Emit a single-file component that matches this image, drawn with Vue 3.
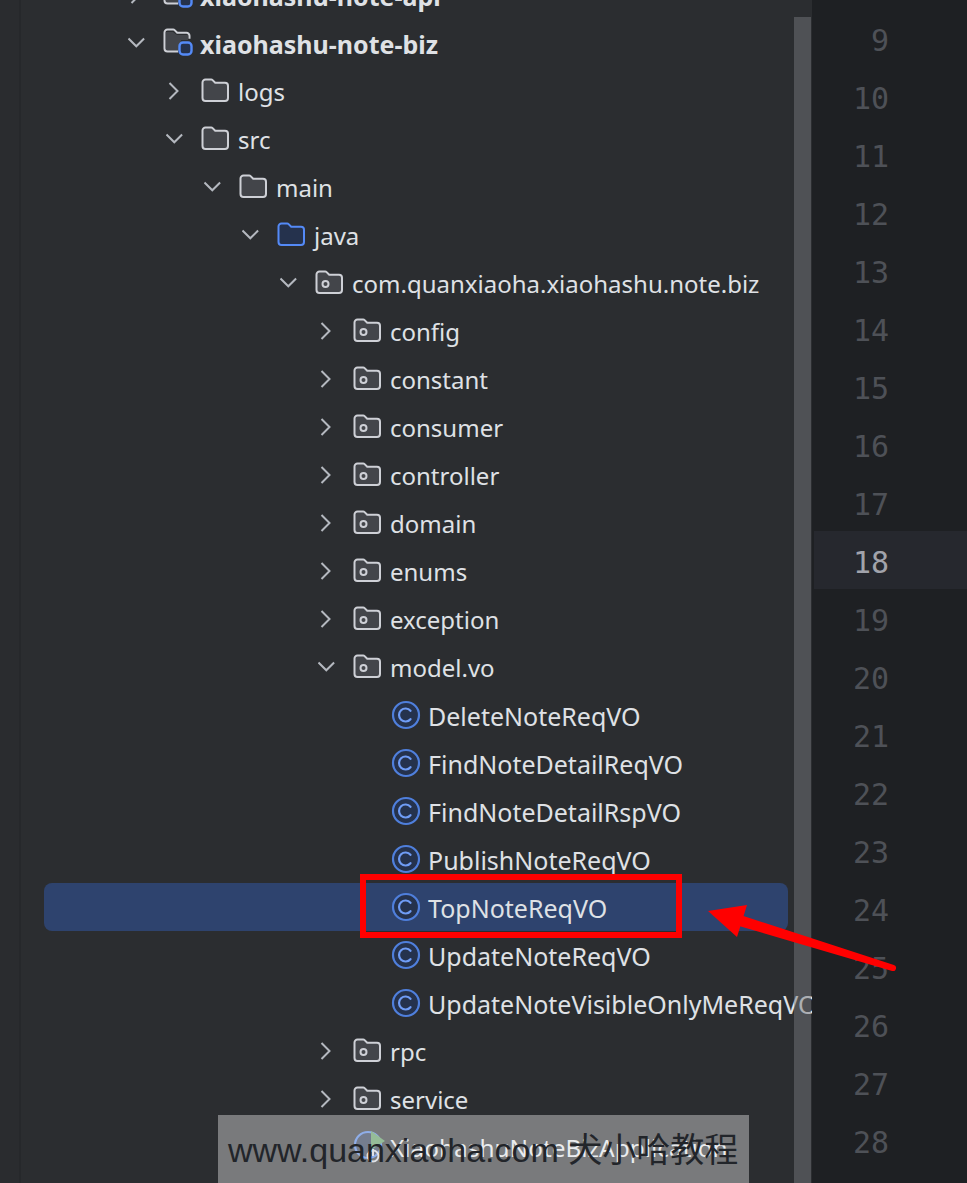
<script setup>
const rows = [
  { label: 'xiaohashu-note-api', level: 0, chevron: 'right', icon: 'module', bold: true },
  { label: 'xiaohashu-note-biz', level: 0, chevron: 'down', icon: 'module', bold: true },
  { label: 'logs', level: 1, chevron: 'right', icon: 'folder' },
  { label: 'src', level: 1, chevron: 'down', icon: 'folder' },
  { label: 'main', level: 2, chevron: 'down', icon: 'folder' },
  { label: 'java', level: 3, chevron: 'down', icon: 'source' },
  { label: 'com.quanxiaoha.xiaohashu.note.biz', level: 4, chevron: 'down', icon: 'package' },
  { label: 'config', level: 5, chevron: 'right', icon: 'package' },
  { label: 'constant', level: 5, chevron: 'right', icon: 'package' },
  { label: 'consumer', level: 5, chevron: 'right', icon: 'package' },
  { label: 'controller', level: 5, chevron: 'right', icon: 'package' },
  { label: 'domain', level: 5, chevron: 'right', icon: 'package' },
  { label: 'enums', level: 5, chevron: 'right', icon: 'package' },
  { label: 'exception', level: 5, chevron: 'right', icon: 'package' },
  { label: 'model.vo', level: 5, chevron: 'down', icon: 'package' },
  { label: 'DeleteNoteReqVO', level: 6, icon: 'class' },
  { label: 'FindNoteDetailReqVO', level: 6, icon: 'class' },
  { label: 'FindNoteDetailRspVO', level: 6, icon: 'class' },
  { label: 'PublishNoteReqVO', level: 6, icon: 'class' },
  { label: 'TopNoteReqVO', level: 6, icon: 'class', selected: true },
  { label: 'UpdateNoteReqVO', level: 6, icon: 'class' },
  { label: 'UpdateNoteVisibleOnlyMeReqVO', level: 6, icon: 'class' },
  { label: 'rpc', level: 5, chevron: 'right', icon: 'package' },
  { label: 'service', level: 5, chevron: 'right', icon: 'package' },
  { label: 'XiaohashuNoteBizApplication', level: 5, icon: 'run' },
]
const lines = [9, 10, 11, 12, 13, 14, 15, 16, 17, 18, 19, 20, 21, 22, 23, 24, 25, 26, 27, 28]
const folderPath = 'M1.5 4.5a3 3 0 0 1 3-3h5.6a2 2 0 0 1 1.5.6l2.6 2.7h9.8a3 3 0 0 1 3 3v12.2a3 3 0 0 1-3 3h-19.5a3 3 0 0 1-3-3z'
</script>

<template>
  <div class="window">
    <div class="strip"></div>
    <div class="tree-panel">
      <div class="tree">
        <div v-for="row in rows" :key="row.label" class="row" :class="{ selected: row.selected }">
          <div class="row-inner" :style="{ paddingLeft: row.level * 38 + 'px' }">
            <span class="chev">
              <svg v-if="row.chevron === 'down'" width="18" height="18" viewBox="0 0 18 18"><path d="M0.500 4.500 8.300 12.300 16.100 4.500" /></svg>
              <svg v-else-if="row.chevron === 'right'" width="18" height="22" viewBox="0 0 18 22"><path d="M3.500 3l8 8-8 8" /></svg>
            </span>
            <span class="icon">
              <svg v-if="row.icon === 'folder'" width="30" height="26" viewBox="0 0 30 26">
                <path :d="folderPath" class="f-grey" />
              </svg>
              <svg v-else-if="row.icon === 'source'" width="30" height="26" viewBox="0 0 30 26">
                <path :d="folderPath" class="f-blue" />
              </svg>
              <svg v-else-if="row.icon === 'package'" width="30" height="26" viewBox="0 0 30 26">
                <path :d="folderPath" class="f-grey" />
                <circle cx="10.500" cy="14" r="3" class="dot" />
              </svg>
              <svg v-else-if="row.icon === 'module'" width="32" height="30" viewBox="0 0 32 30">
                <path d="M3 4h7l4 3h11v5h-7v11H3z" class="f-fill" />
                <path d="M15 23.500H4.500a3 3 0 0 1-3-3V4.500a3 3 0 0 1 3-3h5.600a2 2 0 0 1 1.500.6l2.600 2.700h9.300a3 3 0 0 1 3 3v3" class="f-line" />
                <rect x="16.500" y="14.500" width="12" height="12" rx="3.500" class="mod" />
              </svg>
              <svg v-else-if="row.icon === 'class'" width="30" height="30" viewBox="0 0 30 30">
                <circle cx="15" cy="15" r="13" class="c-ring" />
                <path d="M19.500 10.800A6.500 6.500 0 1 0 19.500 19.200" class="c-letter" />
              </svg>
              <svg v-else-if="row.icon === 'run'" width="34" height="34" viewBox="0 0 34 34">
                <circle cx="15" cy="15" r="13" class="c-ring" />
                <path d="M18 1 32 11 18 20z" class="run-tri" />
                <circle cx="20" cy="26" r="5.500" class="run-power" />
                <path d="M20 19v7" class="run-power" />
              </svg>
            </span>
            <span class="label" :class="{ bold: row.bold, wide: row.icon === 'class', run: row.icon === 'run' }">{{ row.label }}</span>
          </div>
        </div>
      </div>
      <div class="scrollbar"></div>
    </div>
    <div class="gutter">
      <div v-for="n in lines" :key="n" class="line" :class="{ current: n === 18 }"><span class="num">{{ n }}</span></div>
    </div>

    <div class="red-box"></div>
    <svg class="arrow" width="200" height="80" viewBox="0 0 200 80">
      <path d="M39.600 14.800 193.900 65.100a3 3 0 0 1-1.800 5.800L36.400 25.200z" class="arrow-fill" />
      <path d="M8 11 47 5 37 37z" class="arrow-fill" />
    </svg>
    <div class="watermark"><span>www.quanxiaoha.com 犬小哈教程</span></div>
  </div>
</template>

<style>
html, body { margin: 0; background: #1e2023; }
</style>

<style scoped>
.window {
  position: relative;
  width: 967px;
  height: 1183px;
  display: flex;
  overflow: hidden;
  background: #1e2023;
  font-family: "Noto Sans", "Open Sans", sans-serif;
}
.strip {
  width: 19px;
  flex: none;
  background: #2a2c2f;
  border-right: 2px solid #26282b;
}
.tree-panel {
  position: relative;
  width: 791px;
  flex: none;
  background: #2b2d30;
  overflow: hidden;
}
.tree {
  margin-top: -29px;
  padding-left: 23px;
  width: 900px;
}
.row {
  height: 48px;
  width: 744px;
  border-radius: 8px;
}
.row.selected { background: #2e436e; }
.row-inner {
  margin-left: 84px;
  display: flex;
  align-items: center;
  height: 48px;
  white-space: nowrap;
}
.chev {
  width: 38px;
  flex: none;
  display: flex;
  align-items: center;
  height: 48px;
}
.chev svg path {
  fill: none;
  stroke: #b4b8bf;
  stroke-width: 2;
}
.icon {
  width: 38px;
  flex: none;
  display: flex;
  align-items: center;
  height: 48px;
  margin-left: -3px;
  margin-right: -1px;
}
.f-grey { fill: #43454a; stroke: #ced0d6; stroke-width: 2; }
.f-line { fill: none; stroke: #ced0d6; stroke-width: 2; }
.f-blue { fill: #25324d; stroke: #548af7; stroke-width: 2; }
.f-fill { fill: #43454a; stroke: none; }
.dot { fill: none; stroke: #ced0d6; stroke-width: 2; }
.mod { fill: #25324d; stroke: #548af7; stroke-width: 2.400; }
.c-ring { fill: #25324d; stroke: #4f7fdc; stroke-width: 2.200; }
.c-letter { fill: none; stroke: #6f9cf5; stroke-width: 2.200; stroke-linecap: round; }
.run-tri { fill: #57965c; }
.run-power { fill: none; stroke: #ced0d6; stroke-width: 2; }
.label {
  font-size: 24px;
  line-height: 48px;
  padding-top: 2px;
  color: #dfe1e5;
}
.label.wide, .label.bold { font-size: 25px; }
.label.run { font-size: 24.400px; }
.label.bold { font-weight: 700; }
.scrollbar {
  position: absolute;
  left: 773px;
  top: 17px;
  width: 17px;
  bottom: 0;
  background: rgba(120, 122, 125, 0.48);
}
.gutter {
  flex: 1;
  padding-top: 9px;
  background: #1e2023;
  border-left: 2px solid #1e2023;
}
.line {
  height: 58px;
  line-height: 64px;
  font-family: "DejaVu Sans Mono", monospace;
  font-size: 30px;
  color: #4e5157;
}
.line.current {
  background: #26282e;
  color: #a1a3ab;
}
.num {
  display: block;
  width: 75px;
  text-align: right;
}
.red-box {
  position: absolute;
  left: 360px;
  top: 874px;
  width: 322px;
  height: 64px;
  box-sizing: border-box;
  border: 6px solid #f00;
}
.arrow {
  position: absolute;
  left: 700px;
  top: 900px;
  overflow: visible;
}
.arrow-fill { fill: #f00; }
.watermark {
  position: absolute;
  left: 218px;
  top: 1115px;
  width: 531px;
  height: 68px;
  box-sizing: border-box;
  padding: 13px 0 0 10px;
  background: rgba(255, 255, 255, 0.37);
  white-space: nowrap;
}
.watermark span {
  font-family: "Liberation Sans", "Noto Sans CJK SC", sans-serif;
  font-size: 34px;
  line-height: 44px;
  color: #22252a;
}
</style>
